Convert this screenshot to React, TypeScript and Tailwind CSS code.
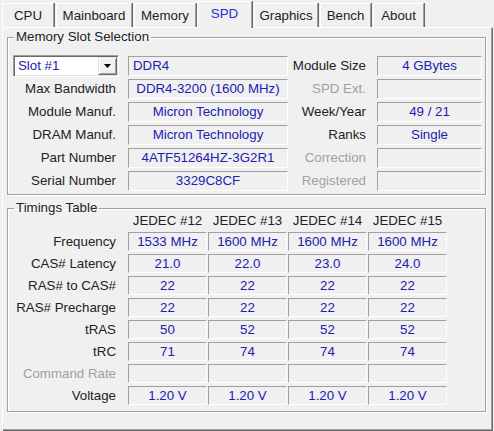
import React from 'react';

const tabs = [
  { name: 'CPU', w: 'w-[52px]' },
  { name: 'Mainboard', w: 'w-[76px]' },
  { name: 'Memory', w: 'w-[62px]' },
  { name: 'SPD', w: 'w-[55px]', active: true },
  { name: 'Graphics', w: 'w-[64px]' },
  { name: 'Bench', w: 'w-[51px]' },
  { name: 'About', w: 'w-[51px]' },
];

const leftRows = [
  ['Max Bandwidth', 'DDR4-3200 (1600 MHz)'],
  ['Module Manuf.', 'Micron Technology'],
  ['DRAM Manuf.', 'Micron Technology'],
  ['Part Number', '4ATF51264HZ-3G2R1'],
  ['Serial Number', '3329C8CF'],
];

const rightRows: { label: string; value: string; off?: boolean }[] = [
  { label: 'Module Size', value: '4 GBytes' },
  { label: 'SPD Ext.', value: '', off: true },
  { label: 'Week/Year', value: '49 / 21' },
  { label: 'Ranks', value: 'Single' },
  { label: 'Correction', value: '', off: true },
  { label: 'Registered', value: '', off: true },
];

const timings: { label: string; values: string[]; off?: boolean }[] = [
  { label: 'Frequency', values: ['1533 MHz', '1600 MHz', '1600 MHz', '1600 MHz'] },
  { label: 'CAS# Latency', values: ['21.0', '22.0', '23.0', '24.0'] },
  { label: 'RAS# to CAS#', values: ['22', '22', '22', '22'] },
  { label: 'RAS# Precharge', values: ['22', '22', '22', '22'] },
  { label: 'tRAS', values: ['50', '52', '52', '52'] },
  { label: 'tRC', values: ['71', '74', '74', '74'] },
  { label: 'Command Rate', values: ['', '', '', ''], off: true },
  { label: 'Voltage', values: ['1.20 V', '1.20 V', '1.20 V', '1.20 V'] },
];

const Field = ({ children, className = '', left = false }: { children?: React.ReactNode; className?: string; left?: boolean }) => (
  <div
    className={`flex items-center border border-t-[#a0a0a0] border-l-[#a0a0a0] border-r-white border-b-white text-[#2020b0] whitespace-nowrap ${left ? 'justify-start pl-[4px]' : 'justify-center'} ${className}`}
  >
    {children}
  </div>
);

const Label = ({ children, off, className = '' }: { children: React.ReactNode; off?: boolean; className?: string }) => (
  <div className={`text-right whitespace-nowrap ${off ? 'text-[#a0a0a0]' : 'text-[#222]'} ${className}`}>{children}</div>
);

export default function App() {
  return (
    <div className="w-[494px] h-[431px] overflow-hidden bg-[#f0f0f0] font-['Liberation_Sans',Arial,sans-serif] text-[13.3px] leading-[16px] select-none">
      {/* tab strip */}
      <div className="flex items-end h-[27px] pl-[2px] gap-[2px]">
        {tabs.map(t =>
          t.active ? (
            <div
              key={t.name}
              className={`${t.w} -ml-px relative z-10 -mb-px h-[27px] flex items-center justify-center pb-[2px] bg-[#f0f0f0] border-l border-t border-white border-r border-r-[#a0a0a0] shadow-[1px_0_0_#696969] text-[#2a2ad0]`}
            >
              {t.name}
            </div>
          ) : (
            <div
              key={t.name}
              className={`${t.w} h-[24px] flex items-center justify-center pt-[1px] bg-[#f0f0f0] border-l border-t border-white border-r border-r-[#a0a0a0] shadow-[1px_0_0_#696969] text-[#222]`}
            >
              {t.name}
            </div>
          )
        )}
      </div>

      {/* panel */}
      <div className="ml-[2px] w-[490px] h-[403px] border border-t-white border-l-white border-r-[#a0a0a0] border-b-[#a0a0a0] shadow-[1px_1px_0_#696969] pl-[4px]">
        <fieldset className="mt-[1px] w-[479px] border border-[#a0a0a0] shadow-[inset_1px_1px_0_#fff,1px_1px_0_#fff] pt-[11px] pb-[3px]">
          <legend className="ml-[6px] px-[2px] text-[#222] leading-[16px]">Memory Slot Selection</legend>
          <div className="flex flex-col gap-[3px]">
            {/* slot row */}
            <div className="flex items-center h-[20px]">
              <div className="ml-[5px] w-[106px] h-[22px] flex items-center bg-white border border-t-[#a0a0a0] border-l-[#a0a0a0] border-r-white border-b-white shadow-[inset_1px_1px_0_#696969,inset_-1px_-1px_0_#e3e3e3]">
                <span className="flex-1 pl-[4px] text-[#2020b0]">Slot #1</span>
                <div className="w-[19px] h-[18px] mr-[1px] flex items-center justify-center bg-[#f0f0f0] border border-t-[#e3e3e3] border-l-[#e3e3e3] border-r-[#696969] border-b-[#696969] shadow-[inset_1px_1px_0_#fff,inset_-1px_-1px_0_#a0a0a0]">
                  <svg width="7" height="4" viewBox="0 0 7 4">
                    <path d="M0 0h7L3.5 4z" fill="#000" />
                  </svg>
                </div>
              </div>
              <Field left className="ml-[9px] w-[160px] h-[20px]">DDR4</Field>
              <Label className="w-[78px]">{rightRows[0].label}</Label>
              <Field className="ml-[11px] w-[105px] h-[20px]">{rightRows[0].value}</Field>
            </div>
            {leftRows.map(([l, v], i) => {
              const r = rightRows[i + 1];
              return (
                <div key={l} className="flex items-center h-[20px]">
                  <Label className="w-[108px]">{l}</Label>
                  <Field className="ml-[12px] w-[160px] h-[20px]">{v}</Field>
                  <Label off={r.off} className="w-[78px]">{r.label}</Label>
                  <Field className="ml-[11px] w-[105px] h-[20px]">{r.value}</Field>
                </div>
              );
            })}
          </div>
        </fieldset>

        <fieldset className="mt-[5px] w-[479px] border border-[#a0a0a0] shadow-[inset_1px_1px_0_#fff,1px_1px_0_#fff] pb-[6px]">
          <legend className="ml-[6px] px-[2px] text-[#222] leading-[16px]">Timings Table</legend>
          <div className="flex -mt-[2px] mb-[4px] h-[14px] leading-[14px] text-[#222]">
            <div className="w-[120px]" />
            <div className="flex gap-[1px]">
              {['JEDEC #12', 'JEDEC #13', 'JEDEC #14', 'JEDEC #15'].map(h => (
                <div key={h} className="w-[79px] text-center whitespace-nowrap">{h}</div>
              ))}
            </div>
          </div>
          <div className="flex flex-col gap-[3px]">
            {timings.map(t => (
              <div key={t.label} className="flex items-center h-[19px]">
                <Label off={t.off} className="w-[108px]">{t.label}</Label>
                <div className="ml-[12px] flex gap-[1px]">
                  {t.values.map((v, i) => (
                    <Field key={i} className="w-[79px] h-[19px]">{v}</Field>
                  ))}
                </div>
              </div>
            ))}
          </div>
        </fieldset>
      </div>
    </div>
  );
}
